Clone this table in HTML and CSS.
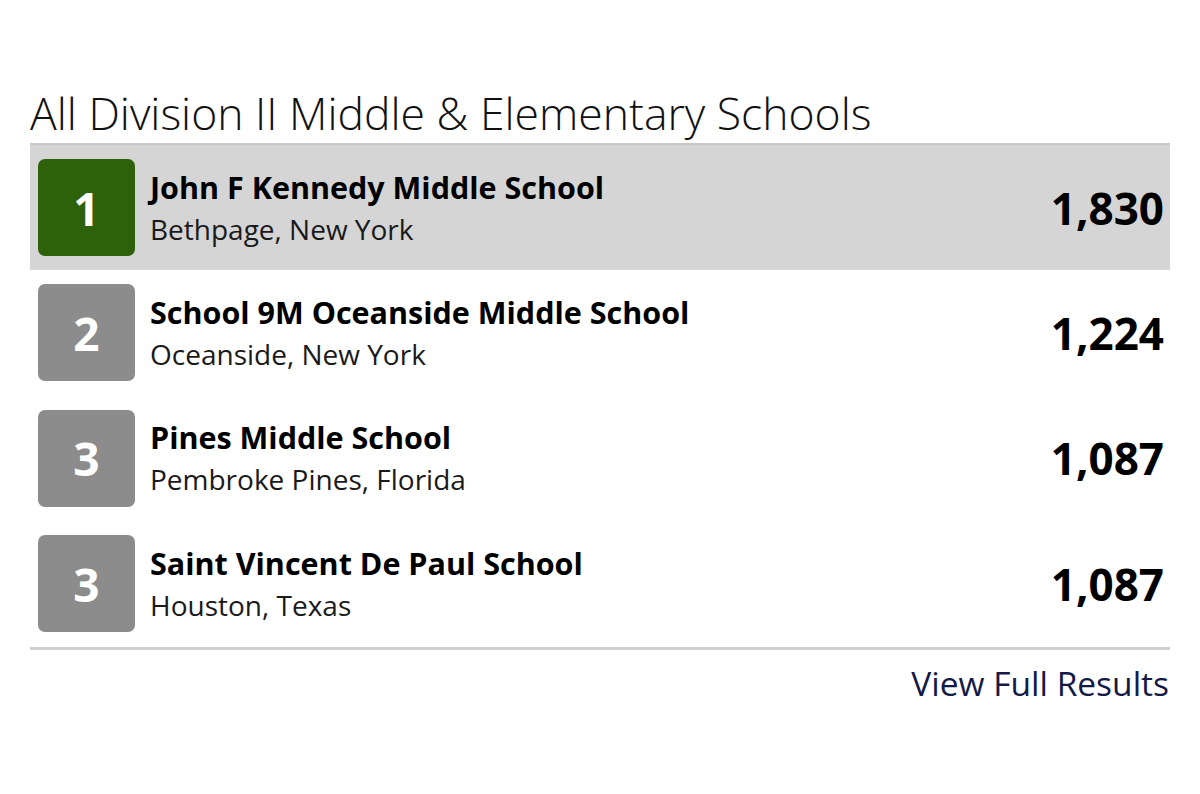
FILE: index.html
```html
<!DOCTYPE html>
<html>
<head>
<meta charset="utf-8">
<link rel="stylesheet" href="styles.css">
</head>
<body>
<div class="board">
  <h1 class="title">All Division II Middle &amp; Elementary Schools</h1>
  <div class="list">
    <div class="row first">
      <div class="badge gold">1</div>
      <div class="info"><div class="name">John F Kennedy Middle School</div><div class="loc">Bethpage, New York</div></div>
      <div class="score">1,830</div>
    </div>
    <div class="row">
      <div class="badge">2</div>
      <div class="info"><div class="name">School 9M Oceanside Middle School</div><div class="loc">Oceanside, New York</div></div>
      <div class="score">1,224</div>
    </div>
    <div class="row">
      <div class="badge">3</div>
      <div class="info"><div class="name">Pines Middle School</div><div class="loc">Pembroke Pines, Florida</div></div>
      <div class="score">1,087</div>
    </div>
    <div class="row">
      <div class="badge">3</div>
      <div class="info"><div class="name">Saint Vincent De Paul School</div><div class="loc">Houston, Texas</div></div>
      <div class="score">1,087</div>
    </div>
  </div>
  <div class="footer"><a class="more" href="#">View Full Results</a></div>
</div>
</body>
</html>
```
FILE: styles.css
```css
html, body { margin: 0; padding: 0; background: #fff; }
body { font-family: "Open Sans", "Liberation Sans", sans-serif; color: #000; }
.board { width: 1140px; margin: 0 0 0 30px; padding-top: 85px; }
.title { font-weight: 300; font-size: 44.5px; line-height: 56px; margin: 0 0 2px 0; color: #111; letter-spacing: 0; }
.list { border-top: 2px solid #c8c8c8; border-bottom: 3px solid #d0d0d0; }
.row { display: flex; align-items: center; height: 125.5px; padding: 0 6px 0 8px; box-sizing: border-box; }
.row.first { background: #d5d5d5; height: 125px; }
.badge { width: 97px; height: 97px; border-radius: 7px; background: #8c8c8c; color: #fff; font-weight: 700; font-size: 46px; display: flex; align-items: center; justify-content: center; flex: none; }
.badge.gold { background: #2d620a; }
.info { flex: 1; margin-left: 15px; }
.name { font-weight: 700; font-size: 30.5px; line-height: 42px; }
.loc { font-size: 28px; line-height: 42px; color: #1a1a1a; }
.score { font-weight: 700; font-size: 44px; }
.footer { display: flex; justify-content: flex-end; padding-top: 10px; }
.more { color: #141a48; text-decoration: none; font-size: 33.5px; margin-right: 1px; }
```
